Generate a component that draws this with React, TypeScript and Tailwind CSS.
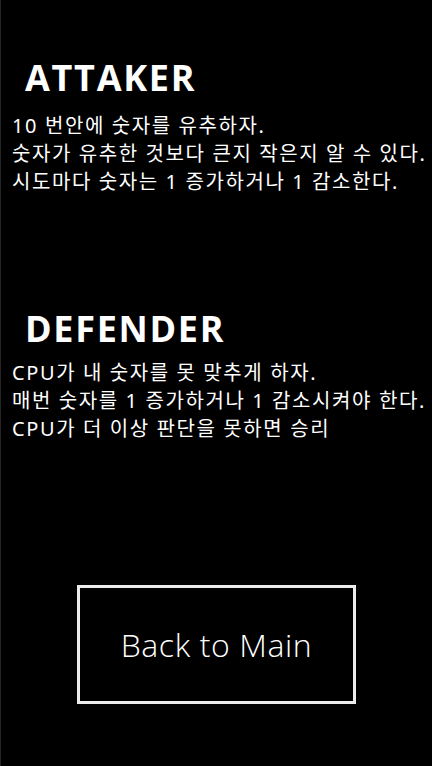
function Section({ title, lines, top, gap }: { title: string; lines: string[]; top: string; gap: string }) {
  return (
    <section className={top}>
      <h1 className="pl-[24px] text-[36px] leading-[44px] font-bold tracking-[1.7px] font-['Open_Sans',sans-serif]">
        {title}
      </h1>
      <div className={`pl-[11px] ${gap} text-[20px] leading-[28px] tracking-[1.6px] whitespace-nowrap font-['Noto_Sans','Noto_Sans_CJK_KR',sans-serif]`}>
        {lines.map((l) => (
          <p key={l}>{l}</p>
        ))}
      </div>
    </section>
  );
}

export default function App() {
  return (
    <div className="w-[432px] h-[766px] bg-black border-l border-[#262626] text-white flex flex-col overflow-hidden">
      <Section
        top="pt-[56px]"
        gap="mt-[12px]"
        title="ATTAKER"
        lines={['10 번안에 숫자를 유추하자.', '숫자가 유추한 것보다 큰지 작은지 알 수 있다.', '시도마다 숫자는 1 증가하거나 1 감소한다.']}
      />
      <Section
        top="pt-[111px]"
        gap="mt-[8px]"
        title="DEFENDER"
        lines={['CPU가 내 숫자를 못 맞추게 하자.', '매번 숫자를 1 증가하거나 1 감소시켜야 한다.', 'CPU가 더 이상 판단을 못하면 승리']}
      />
      <div className="flex justify-center pt-[142px]">
        <button className="w-[279px] h-[119px] border-[3px] border-[#ececec] bg-black text-white text-[32px] font-light tracking-[0.6px] font-['Open_Sans',sans-serif]">
          Back to Main
        </button>
      </div>
    </div>
  );
}
